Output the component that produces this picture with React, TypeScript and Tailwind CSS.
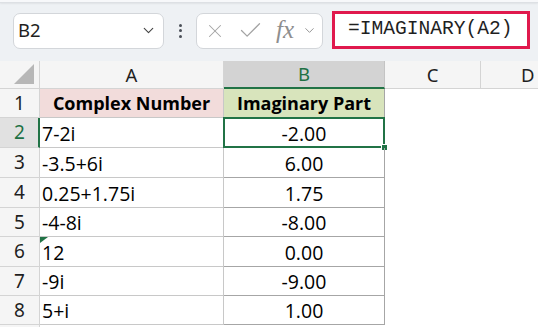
import React from "react";
import { ChevronDown, X, Check } from "lucide-react";

const rows: { a: string; b: string; h: number }[] = [
  { a: "7-2i", b: "-2.00", h: 30 },
  { a: "-3.5+6i", b: "6.00", h: 30 },
  { a: "0.25+1.75i", b: "1.75", h: 30 },
  { a: "-4-8i", b: "-8.00", h: 29 },
  { a: "12", b: "0.00", h: 30 },
  { a: "-9i", b: "-9.00", h: 29 },
  { a: "5+i", b: "1.00", h: 29 },
];

const cellFont = { fontFamily: '"Open Sans", "Noto Sans", sans-serif' };
const uiFont = { fontFamily: '"Noto Sans", "Open Sans", sans-serif' };

export default function App() {
  return (
    <div className="w-[538px] h-[327px] overflow-hidden bg-white flex flex-col" style={uiFont}>
      {/* formula bar */}
      <div className="h-[61px] bg-[#eef1f4] flex flex-col shrink-0">
        <div className="h-[3px] bg-[#f7f8fa] border-b border-[#dde0e4] shadow-[0_1px_2px_rgba(0,0,0,0.06)]" />
        <div className="flex items-center pt-[9px] pl-[13px]">
          <div className="w-[151px] h-[36px] bg-white border border-[#d3d6da] rounded-[7px] flex items-center justify-between pl-[4px] pr-[6px]">
            <span className="text-[18.5px] text-[#1f1f1f] leading-none">B2</span>
            <ChevronDown size={17} strokeWidth={1.6} className="text-[#444]" />
          </div>
          <div className="w-[32px] flex flex-col items-center gap-[2.5px]">
            <div className="w-[3px] h-[3px] rounded-full bg-[#4a4f57]" />
            <div className="w-[3px] h-[3px] rounded-full bg-[#4a4f57]" />
            <div className="w-[3px] h-[3px] rounded-full bg-[#4a4f57]" />
          </div>
          <div className="w-[127px] h-[36px] bg-white border border-[#d3d6da] rounded-[7px] flex items-center pl-[7px]">
            <X size={22} strokeWidth={1.1} className="text-[#a3a3a3]" />
            <Check size={27} strokeWidth={1.1} className="text-[#a3a3a3] ml-[11px]" />
            <span
              className="ml-[12px] text-[25px] italic text-[#8e8e8e] leading-none -mt-[3px]"
              style={{ fontFamily: '"Liberation Serif", "DejaVu Serif", serif' }}
            >
              fx
            </span>
            <ChevronDown size={15} strokeWidth={1.5} className="text-[#8e8e8e] ml-[8px]" />
          </div>
          <div className="ml-[9px] w-[198px] h-[38px] bg-white border-[3px] border-[#e0194d] flex items-center pl-[13px] -mt-[1px]">
            <span
              className="text-[19.6px] text-[#1f1f1f] leading-none"
              style={{ fontFamily: '"Liberation Mono", "DejaVu Sans Mono", monospace' }}
            >
              =IMAGINARY(A2)
            </span>
          </div>
        </div>
      </div>

      {/* column headers */}
      <div className="h-[28px] flex shrink-0 bg-[#f5f5f5] border-b border-[#d4d4d4]">
        <div className="w-[40px] border-r border-[#d4d4d4] flex items-end justify-end pr-[5px] pb-[4px]">
          <svg width="20" height="20" viewBox="0 0 20 20">
            <polygon points="20,0 20,20 0,20" fill="#b7b7b7" />
          </svg>
        </div>
        <div className="w-[184px] border-r border-[#d4d4d4] flex items-center justify-center text-[18.5px] text-[#1f1f1f]">
          A
        </div>
        <div className="w-[161px] bg-[#d3d3d3] border-r border-[#c4c4c4] border-b-2 border-b-[#217346] -mb-[1px] flex items-center justify-center text-[18.5px] text-[#1e7145]">
          B
        </div>
        <div className="w-[96px] border-r border-[#d4d4d4] flex items-center justify-center text-[18.5px] text-[#1f1f1f]">
          C
        </div>
        <div className="flex-1 flex items-center pl-[40px] text-[18.5px] text-[#1f1f1f]">D</div>
      </div>

      {/* row 1 */}
      <div className="h-[29px] flex shrink-0">
        <div className="w-[40px] bg-[#f5f5f5] border-r border-b border-[#d4d4d4] flex items-center justify-center text-[19px] text-[#1f1f1f]">
          1
        </div>
        <div
          className="w-[184px] bg-[#f2dcdb] border-r border-b border-[#c8c8c8] flex items-center justify-center text-[18px] font-bold text-black pt-[1px]"
          style={cellFont}
        >
          Complex Number
        </div>
        <div
          className="w-[161px] bg-[#d8e4bc] border-r border-b border-[#a6a6a6] flex items-center justify-center text-[18px] font-bold text-black pt-[1px]"
          style={cellFont}
        >
          Imaginary Part
        </div>
        <div className="flex-1" />
      </div>

      {rows.map((r, i) => {
        const selected = i === 0;
        return (
          <div key={i} className="flex shrink-0" style={{ height: r.h }}>
            <div
              className={
                selected
                  ? "w-[40px] bg-[#e1e1e1] border-r-2 border-r-[#217346] border-b border-b-[#d4d4d4] flex items-center justify-center text-[19px] text-[#1e7145] pl-[1px]"
                  : "w-[40px] bg-[#f5f5f5] border-r border-b border-[#d4d4d4] flex items-center justify-center text-[19px] text-[#1f1f1f]"
              }
            >
              {i + 2}
            </div>
            <div
              className="relative w-[184px] border-r border-b border-[#c8c8c8] flex items-center pl-[2px] pt-[2px] text-[19.5px] leading-none text-black"
              style={cellFont}
            >
              {i === 4 && (
                <svg className="absolute left-0 top-0" width="8" height="6" viewBox="0 0 8 6">
                  <polygon points="0,0 8,0 0,6" fill="#217346" />
                </svg>
              )}
              {r.a}
            </div>
            <div
              className="relative w-[161px] border-r border-b border-[#a6a6a6] flex items-center justify-center pt-[2px] text-[19.5px] leading-none text-black"
              style={cellFont}
            >
              {selected && (
                <>
                  <div className="absolute -left-[1px] -top-[1px] -right-[1px] -bottom-[1px] border-2 border-[#217346]" />
                  <div className="absolute -right-[4px] -bottom-[4px] w-[7px] h-[7px] bg-[#217346] border border-white" />
                </>
              )}
              {r.b}
            </div>
            <div className="flex-1" />
          </div>
        );
      })}
      <div className="h-[2px] flex">
        <div className="w-[40px] bg-[#f5f5f5] border-r border-[#d4d4d4]" />
      </div>
    </div>
  );
}
